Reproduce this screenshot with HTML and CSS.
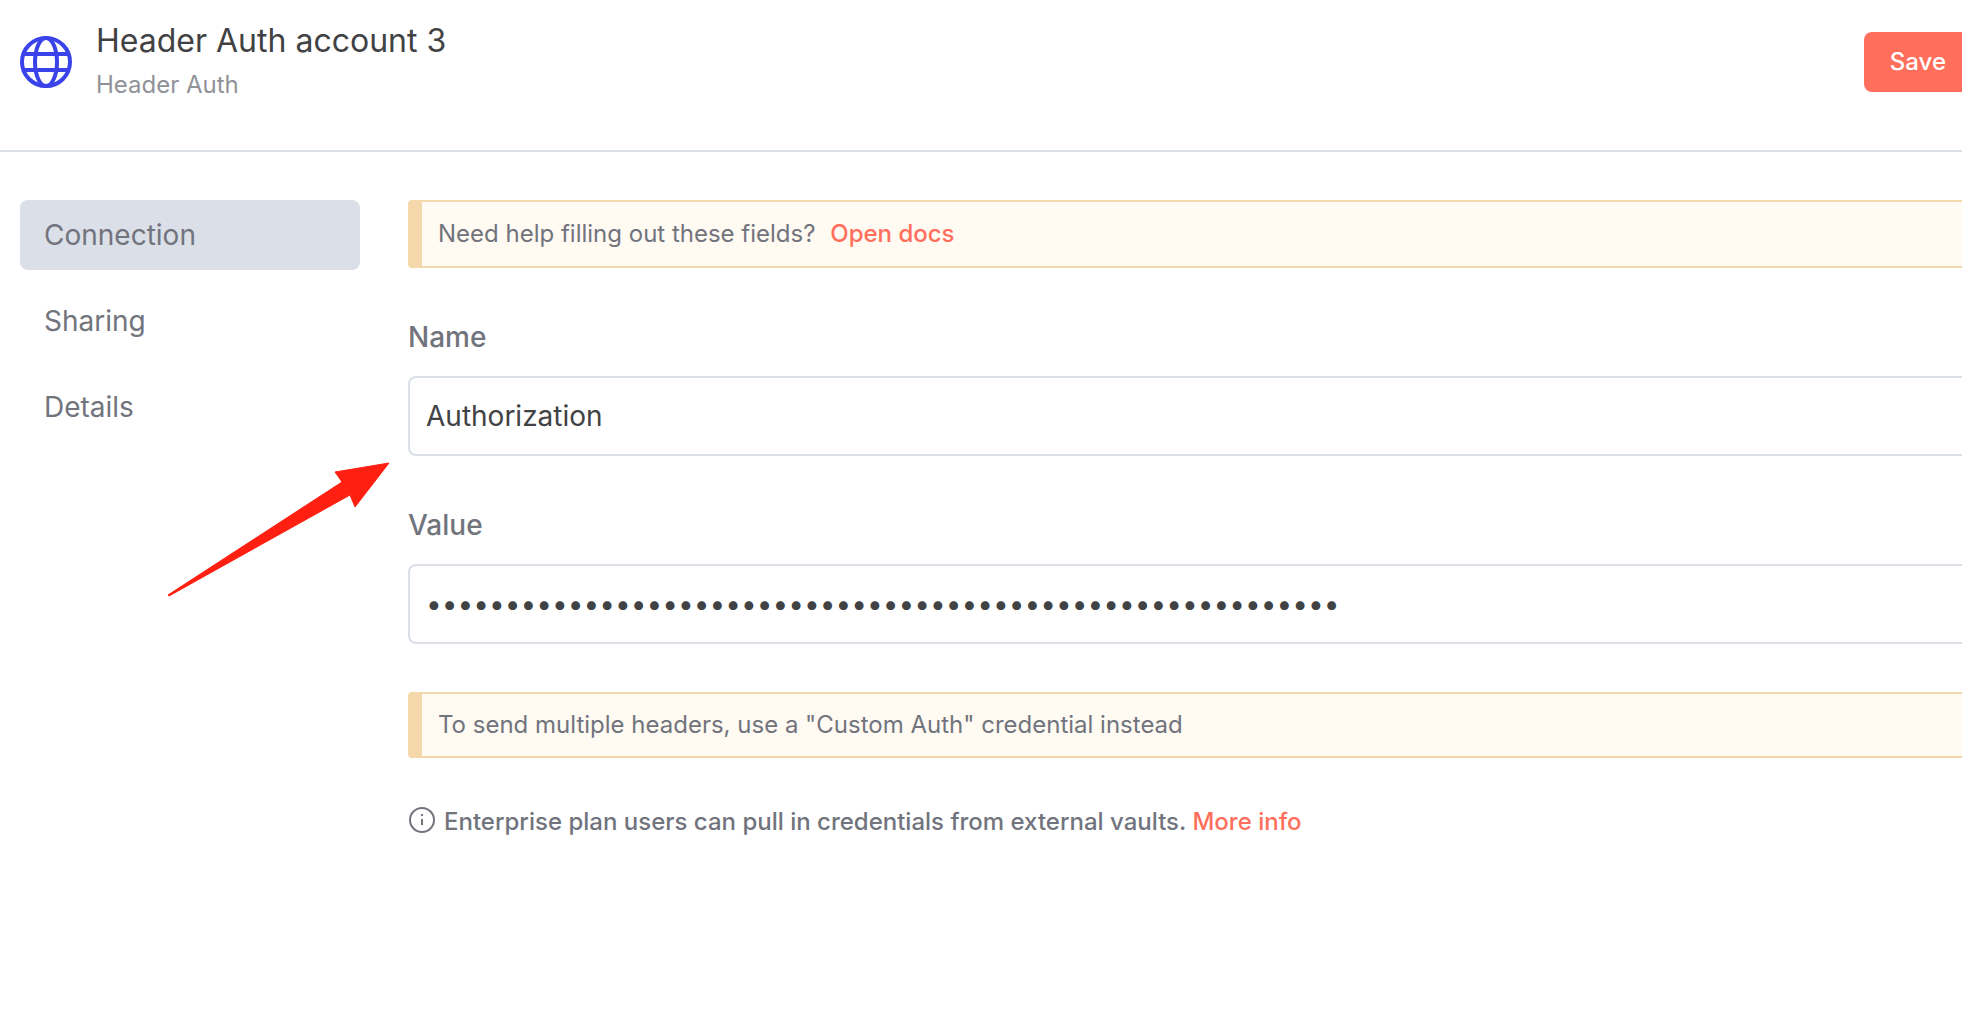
FILE: index.html
```html
<!DOCTYPE html>
<html lang="en">
  <head>
    <meta charset="UTF-8" />
    <meta name="viewport" content="width=device-width, initial-scale=1.0" />
    <link rel="stylesheet" href="styles.css">
    <title>Header Auth account 3</title>
  </head>
  <body>
    <header class="header">
      <svg class="credential-icon" viewBox="0 0 52 52">
        <circle cx="26" cy="26" r="24" />
        <ellipse cx="26" cy="26" rx="11" ry="24" />
        <line x1="4" y1="18" x2="48" y2="18" />
        <line x1="4" y1="34" x2="48" y2="34" />
      </svg>
      <div class="credential-info">
        <h1>Header Auth account 3</h1>
        <span>Header Auth</span>
      </div>
      <button class="save">Save</button>
    </header>
    <div class="container">
      <nav class="menu">
        <a href="#connection" class="active">Connection</a>
        <a href="#sharing">Sharing</a>
        <a href="#details">Details</a>
      </nav>
      <main class="content">
        <div class="callout callout-docs">
          Need help filling out these fields? <a href="#docs">Open docs</a>
        </div>
        <div class="field">
          <label for="name">Name</label>
          <input type="text" id="name" value="Authorization" />
        </div>
        <div class="field">
          <label for="value">Value</label>
          <input
            type="password"
            id="value"
            value="1234567890123456789012345678901234567890123456789012345678"
          />
        </div>
        <div class="callout">
          To send multiple headers, use a "Custom Auth" credential instead
        </div>
        <div class="vaults">
          <svg class="info-icon" viewBox="0 0 28 28">
            <circle cx="14" cy="14" r="12" />
            <line x1="14" y1="13" x2="14" y2="19" />
            <line x1="14" y1="8" x2="14" y2="10" />
          </svg>
          <p>
            Enterprise plan users can pull in credentials from external vaults.
            <a href="#more">More info</a>
          </p>
        </div>
      </main>
      <!-- Pointer to the name and value fields -->
      <svg class="arrow" viewBox="0 0 224 136">
        <polygon points="1,133 175,20 168,10 222,1 188,45 183,33 2,134" />
      </svg>
    </div>
  </body>
</html>
```
FILE: styles.css
```css
* {
  box-sizing: border-box;
}
body {
  margin: 0;
  background-color: #fff;
  color: #71747d;
  font-family: Inter, "Liberation Sans", sans-serif;
  font-size: 24px;
  line-height: 32px;
}
a {
  color: #ff6f5c;
  font-weight: 500;
  text-decoration: none;
}
.header {
  display: flex;
  align-items: flex-start;
  height: 152px;
  padding: 21px 0 0 20px;
  border-bottom: 2px solid #dbdfe7;
}
.credential-icon {
  width: 52px;
  height: 52px;
  margin-top: 15px;
  fill: none;
  stroke: #3a42e9;
  stroke-width: 4px;
}
.credential-info {
  flex: 1;
  margin-left: 24px;
}
.credential-info h1 {
  margin: 0 0 8px;
  color: #414244;
  font-size: 32px;
  font-weight: 400;
  line-height: 40px;
}
.credential-info span {
  display: block;
  color: #909298;
}
.save {
  height: 60px;
  margin-top: 11px;
  padding: 0 16px 2px 26px;
  border: 0;
  border-radius: 8px 0 0 8px;
  background-color: #ff6f5c;
  color: #fff;
  font-family: inherit;
  font-size: 24px;
  font-weight: 500;
  cursor: pointer;
}
.container {
  position: relative;
  display: flex;
  gap: 48px;
  padding: 48px 0 48px 20px;
}
.menu {
  display: flex;
  flex-direction: column;
  gap: 16px;
  width: 340px;
}
.menu a {
  padding: 16px 24px;
  border-radius: 8px;
  color: #71747d;
  font-size: 28px;
  font-weight: 400;
  line-height: 38px;
}
.menu a.active {
  background-color: #dbdfe7;
}
.content {
  flex: 1;
}
.callout {
  padding: 15px 16px;
  border: 2px solid #f5d7ac;
  border-left-width: 14px;
  border-right: 0;
  border-radius: 4px 0 0 4px;
  background-color: #fffaf2;
}
.callout-docs {
  padding: 16px;
}
.callout a {
  margin-left: 8px;
}
.field {
  margin: 48px 0;
}
.field label {
  display: block;
  margin-bottom: 18px;
  font-size: 28px;
  font-weight: 500;
  line-height: 42px;
}
.field input {
  display: block;
  width: 100%;
  height: 80px;
  padding: 0 16px;
  border: 2px solid #dbdfe7;
  border-right: 0;
  border-radius: 8px 0 0 8px;
  background-color: #fff;
  color: #414244;
  font-family: inherit;
  font-size: 28px;
}
.vaults {
  display: flex;
  align-items: flex-start;
  gap: 8px;
  margin-top: 48px;
  font-weight: 500;
}
.vaults p {
  margin: 0;
}
.info-icon {
  width: 28px;
  height: 28px;
  fill: none;
  stroke: #71747d;
  stroke-width: 2px;
}
.arrow {
  position: absolute;
  top: 310px;
  left: 167px;
  width: 224px;
  height: 136px;
  fill: #ff2012;
  stroke: #ff2012;
  stroke-width: 1px;
  stroke-linejoin: round;
}
```
